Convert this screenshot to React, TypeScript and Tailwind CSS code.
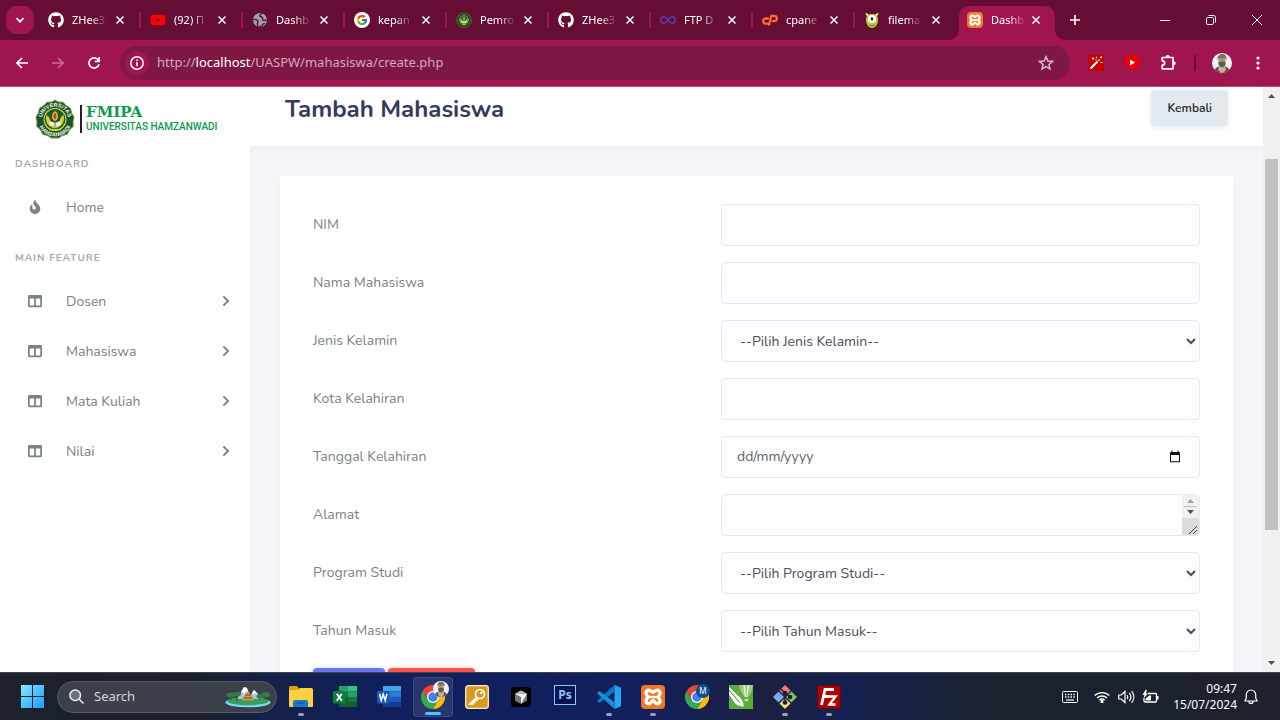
import type { ReactNode } from "react";
import { FaChevronRight, FaColumns, FaFire, FaGithub, FaYoutube } from "react-icons/fa";
import { FcGoogle } from "react-icons/fc";

function Globe() {
  return (
    <svg viewBox="0 0 16 16" className="size-4">
      <circle cx="8" cy="8" r="7" fill="#9aa0a6" />
      <path d="M1.200 7.600c1.800-.4 3.800.2 4.600 1.200.8 1-.2 1.800-.4 2.600-.2 1 .4 1.800.6 3.400M10.200 1.300C9 2.200 7.600 2.600 7.800 3.800c.2 1 2 .8 2.600 1.800.6 1-.4 2 .6 2.600 1 .5 2.400-.2 3.800.3M7 14.800c1.800.2 3-.8 3.600-2 .4-1 1.600-1 2.200-1.600" fill="none" stroke="#650d33" strokeWidth="1.400" />
    </svg>
  );
}

function Emblem({ detailed = false, className }: { detailed?: boolean; className: string }) {
  return (
    <svg viewBox="0 0 40 40" className={className}>
      <path d="M20 1l3 2 5 .2 3 3.400 4.500 2.600 1 4.800 2.500 4-1 4.500.2 5-3.700 3.300-2.200 4.400-4.800 1.400L23.500 39h-7l-4-2.400-4.800-1.400-2.200-4.400L1.800 27.500l.2-5-1-4.500 2.500-4 1-4.800L9 6.600l3-3.400L17 3z" fill="#14542e" stroke="#8a8b2e" strokeWidth="1" />
      <circle cx="20" cy="20.500" r="11.500" fill="#d8d23a" />
      <circle cx="20" cy="20.500" r="10.400" fill="#1b5a2c" />
      <path d="M11.500 16c-2 7 2.500 13 8.500 13s10.500-6 8.500-13c-3 1.500-4 5-4 8.500h-9c0-3.500-1-7-4-8.500z" fill="#d9cf3b" />
      <path d="M20 12c-2.200 1.800-3 3.400-3 5.500 0 2 1 3.500 3 4.500 2-1 3-2.500 3-4.500 0-2.100-.8-3.700-3-5.500z" fill="#e0c22d" />
      <path d="M20 13.500c-2 2-2.200 5 0 7 2.200-2 2-5 0-7z" fill="#d4342a" />
      <path d="M14.500 22l5.500 1.800 5.500-1.800v4L20 27.600 14.500 26z" fill="#f2f2e6" />
      <path d="M20 23.800v3.800" stroke="#14542e" strokeWidth=".8" />
      <path d="M14 30.500h12" stroke="#d9cf3b" strokeWidth="1.400" />
      {detailed && (
        <>
          <path id="ring-top" d="M6.700 21a13.300 13.300 0 0 1 26.600 0" fill="none" />
          <path id="ring-bottom" d="M3 20.500a17 17 0 0 0 34 0" fill="none" />
          <text fontFamily="Liberation Sans" fontWeight="700" fontSize="5.500" fill="#f4f6ea">
            <textPath href="#ring-top" startOffset="50%" textAnchor="middle">UNIVERSITAS</textPath>
          </text>
          <text fontFamily="Liberation Sans" fontWeight="700" fontSize="5.500" fill="#f4f6ea">
            <textPath href="#ring-bottom" startOffset="50%" textAnchor="middle">HAMZANWADI</textPath>
          </text>
        </>
      )}
    </svg>
  );
}

function InfinityMark() {
  return (
    <svg viewBox="0 0 16 16" className="size-4">
      <path d="M8 8c1.300-2 2.300-3.200 4-3.200a3.200 3.200 0 0 1 0 6.400C10.300 11.200 9.300 10 8 8S5.700 4.800 4 4.800a3.200 3.200 0 0 0 0 6.400C5.700 11.200 6.700 10 8 8z" fill="none" stroke="#6b35b5" strokeWidth="1.500" />
    </svg>
  );
}

function CPanelMark() {
  return (
    <svg viewBox="0 0 16 12" className="h-3 w-4" fill="none" stroke="#ff6c2c" strokeWidth="2.300" strokeLinecap="round" strokeLinejoin="round">
      <path d="M6 4.500H3.800a2.600 2.600 0 0 0 0 5.200h1.400" />
      <path d="M7 10.600L9.400 1.800h2.800a2.700 2.700 0 0 1 0 5.400h-1.400" />
    </svg>
  );
}

function Monster() {
  return (
    <svg viewBox="0 0 16 16" className="size-4">
      <path d="M1.500.5c0 2.200.8 3.500 2.500 4L6 3zM14.500.5c0 2.200-.8 3.500-2.500 4L10 3z" fill="#e8d98a" />
      <path d="M8 2c4 0 6 2.500 6 6s-2 8-6 8-6-4.500-6-8 2-6 6-6z" fill="#b9c93c" />
      <circle cx="8" cy="7" r="4" fill="#fff" />
      <ellipse cx="8" cy="6.800" rx="1.200" ry="1.900" fill="#222" />
      <path d="M5 13c2 1 4 1 6 0" stroke="#6d7d18" fill="none" />
    </svg>
  );
}

function XamppTile({ className }: { className: string }) {
  return (
    <span className={`flex items-center justify-center rounded-sm bg-[#f37623] ${className}`}>
      <svg viewBox="0 0 24 24" className="size-full" fill="none" stroke="#fff" strokeWidth="3.400" strokeLinejoin="round">
        <path d="M8 5.200c2 0 2.500 2 4 2s2-2 4-2a2.900 2.900 0 0 1 3 2.900c0 1.800-1.500 2.200-1.500 3.900s1.500 2.100 1.500 3.900a2.900 2.900 0 0 1-3 2.900c-2.300 0-2-3-4-3s-1.700 3-4 3a2.900 2.900 0 0 1-3-2.900c0-1.800 1.500-2.200 1.500-3.900S5 9.900 5 8.100a2.900 2.900 0 0 1 3-2.900z" />
        <path d="M7 12h10" strokeWidth="2.400" />
      </svg>
    </span>
  );
}

const tabs: { title: string; icon: ReactNode }[] = [
  { title: "ZHee3", icon: <FaGithub className="size-4 text-white" /> },
  { title: "(92) П", icon: <FaYoutube className="size-4 text-[#ff0000]" /> },
  { title: "Dashb", icon: <Globe /> },
  { title: "kepan", icon: <span className="rounded-full bg-white p-0.5"><FcGoogle className="size-3" /></span> },
  { title: "Pemro", icon: <Emblem className="size-4" /> },
  { title: "ZHee3", icon: <FaGithub className="size-4 text-white" /> },
  { title: "FTP D", icon: <InfinityMark /> },
  { title: "cpane", icon: <CPanelMark /> },
  { title: "filema", icon: <Monster /> },
];

function Cross() {
  return (
    <svg viewBox="0 0 8 8" className="size-2">
      <path d="M.5.5l7 7M7.500.5l-7 7" stroke="#fff" strokeWidth="1.500" />
    </svg>
  );
}

function TabBody({ title, icon }: { title: string; icon: ReactNode }) {
  return (
    <>
      <span className="flex size-4 shrink-0 items-center justify-center">{icon}</span>
      <span className="ml-2 min-w-8 text-[11px] whitespace-nowrap text-white [mask-image:linear-gradient(to_right,black_55%,rgba(0,0,0,0.15)_100%)]">
        {title}
      </span>
      <button aria-label="Close tab" className="absolute right-[13px] flex size-3 items-center justify-center">
        <Cross />
      </button>
    </>
  );
}

function TabStrip() {
  return (
    <div className="flex h-10 shrink-0 items-center bg-[#650d33]">
      <button aria-label="Search tabs" className="mr-[5px] ml-1.5 flex size-7 items-center justify-center rounded-[10px] bg-[#a1154f]">
        <svg viewBox="0 0 10 10" className="size-2.5">
          <path d="M1.500 3.200L5 6.700l3.500-3.500" fill="none" stroke="#fff" strokeWidth="1.700" />
        </svg>
      </button>
      {tabs.map((tab, i) => (
        <div key={i} className="flex w-[102px] items-center">
          <div className="relative flex flex-1 items-center pl-[9px]">
            <TabBody {...tab} />
          </div>
          <span className={i < tabs.length - 1 ? "h-4 w-0.5 bg-[#a1154f]" : "h-4 w-0.5"} />
        </div>
      ))}
      <div className="relative ml-0.5 flex h-[34px] w-24 items-center self-end rounded-t-[10px] bg-[#a1154f] pb-1.5">
        <svg viewBox="0 0 10 10" className="absolute bottom-0 -left-2.5 size-2.5">
          <path d="M10 0v10H0A10 10 0 0 0 10 0z" fill="#a1154f" />
        </svg>
        <svg viewBox="0 0 10 10" className="absolute -right-2.5 bottom-0 size-2.5">
          <path d="M0 0v10h10A10 10 0 0 1 0 0z" fill="#a1154f" />
        </svg>
        <div className="relative flex flex-1 items-center pl-2">
          <TabBody title="Dashb" icon={<XamppTile className="size-4" />} />
        </div>
      </div>
      <button aria-label="New tab" className="ml-1.5 flex size-7 items-center justify-center">
        <svg viewBox="0 0 10 10" className="size-2.5">
          <path d="M5 0v10M0 5h10" stroke="#fff" strokeWidth="1.600" />
        </svg>
      </button>
      <div className="ml-auto flex">
        <button aria-label="Minimize" className="flex h-10 w-[46px] items-center justify-center">
          <svg viewBox="0 0 10 10" className="size-2.5"><path d="M0 5.500h10" stroke="#fff" /></svg>
        </button>
        <button aria-label="Restore" className="flex h-10 w-[46px] items-center justify-center">
          <svg viewBox="0 0 10 10" className="size-2.5" fill="none" stroke="#fff">
            <rect x=".5" y="2.500" width="7" height="7" rx="1.200" />
            <path d="M2.500.5h5a2 2 0 0 1 2 2v5" />
          </svg>
        </button>
        <button aria-label="Close" className="flex h-10 w-[46px] items-center justify-center">
          <svg viewBox="0 0 10 10" className="size-2.5"><path d="M0 0l10 10M10 0L0 10" stroke="#fff" /></svg>
        </button>
      </div>
    </div>
  );
}

function ToolButton({ label, children }: { label: string; children: ReactNode }) {
  return (
    <button aria-label={label} className="flex h-9 w-9 shrink-0 items-center justify-center">
      {children}
    </button>
  );
}

function Avatar({ className }: { className: string }) {
  return (
    <svg viewBox="0 0 20 20" className={className}>
      <clipPath id="avatar-clip"><circle cx="10" cy="10" r="10" /></clipPath>
      <g clipPath="url(#avatar-clip)">
        <rect width="20" height="20" fill="#e9f3f0" />
        <path d="M2 20c0-4 2.500-6 5-6.500h6c2.500.5 5 2.500 5 6.500z" fill="#544e4e" />
        <path d="M7.500 12h5l1.500 5-3 3H9l-3-3z" fill="#d3ab90" />
        <path d="M6.500 5h7v5c0 2.500-1.500 4-3.500 4s-3.500-1.500-3.500-4z" fill="#b98f7a" />
        <path d="M6.500 9.200l3.500-.7 3.500.7v1.800c0 2-2 3.200-3.500 3.200s-3.500-1.200-3.500-3.200z" fill="#5f5a5b" />
        <path d="M5.500 7C5 3.500 7 1 10 1s5.300 2 4.500 6L13 5l-4 .5L7 5z" fill="#7c716c" />
      </g>
    </svg>
  );
}

function Toolbar() {
  return (
    <div className="flex h-[47px] shrink-0 items-center border-b border-[#bb4a79] bg-[#a1154f] px-1">
      <ToolButton label="Back">
        <svg viewBox="0 0 12 12" className="size-3" fill="none" stroke="#fff" strokeWidth="1.600"><path d="M12 6H1.200M6 1L1 6l5 5" /></svg>
      </ToolButton>
      <ToolButton label="Forward">
        <svg viewBox="0 0 12 12" className="size-3" fill="none" stroke="#c76d94" strokeWidth="1.600"><path d="M0 6h10.800M6 1l5 5-5 5" /></svg>
      </ToolButton>
      <ToolButton label="Reload">
        <svg viewBox="0 0 12 12" className="size-3" fill="none" stroke="#fff" strokeWidth="1.700"><path d="M11 7.200A5.100 5.100 0 1 1 9.800 2.500L11 4M11.100 0v4.300H6.800" /></svg>
      </ToolButton>
      <div className="ml-2 flex h-[34px] flex-1 items-center rounded-full bg-[#7e1842] pr-[15px] pl-[5px]">
        <button aria-label="Site information" className="flex size-6 items-center justify-center rounded-full bg-[#a1154f]">
          <svg viewBox="0 0 14 14" className="size-3.5" fill="none" stroke="#fff" strokeWidth="1.500"><circle cx="7" cy="7" r="6.200" /><path d="M7 6v4.300M7 3.500V5" /></svg>
        </button>
        <span className="ml-2 flex-1 text-[13px] text-[#d5a9bc]">
          http://<span className="text-white">localhost</span>/UASPW/mahasiswa/create.php
        </span>
        <button aria-label="Bookmark" className="flex size-[18px] items-center justify-center">
          <svg viewBox="0 0 16 16" className="size-4" fill="none" stroke="#d9bcc9" strokeWidth="1.500"><path d="M8 1.800l1.800 4.300 4.700.4-3.600 3 1.100 4.500L8 11.600 4 14l1.100-4.500-3.600-3 4.700-.4z" /></svg>
        </button>
      </div>
      <div className="ml-2 flex items-center">
        <ToolButton label="Magic wand">
          <svg viewBox="0 0 16 16" className="size-4">
            <rect width="16" height="16" fill="#c40000" />
            <path d="M2.500 13.500l7-7" stroke="#fff" strokeWidth="2.200" />
            <path d="M10 6l1.500-1.500M4 3.500h2M5 2.500v2M8 2l.8.8M12.500 7.500h2M12 3l2-1.500M7.500 4.500l1 .5" stroke="#fff" strokeWidth="1.200" />
          </svg>
        </ToolButton>
        <ToolButton label="Video enhancer">
          <svg viewBox="0 0 16 16" className="size-4"><path d="M.3 3C2.500 1 5 .6 8 .6s5.500.4 7.700 2.400C15.700 9 13 13 8 15.500 3 13 .3 9 .3 3z" fill="#f50000" /><path d="M6 4.600v5.800L11 7.500z" fill="#fff" /></svg>
        </ToolButton>
        <ToolButton label="Extensions">
          <svg viewBox="0 0 18 18" className="size-[18px]"><path d="M3.200 3.500H14v11.300H3.200v-3.600c3.300-.3 3.300-4.100 0-4.400z" fill="none" stroke="#fff" strokeWidth="1.700" strokeLinejoin="round" /><path d="M6.700 3a2 2 0 0 1 4 0zM14.700 7.200a2 2 0 0 1 0 4z" fill="#fff" /></svg>
        </ToolButton>
        <span className="mx-2 h-4 w-0.5 bg-[#650d33]" />
        <ToolButton label="Profile"><Avatar className="size-5" /></ToolButton>
        <ToolButton label="Menu">
          <svg viewBox="0 0 4 14" className="h-3.5 w-1" fill="#fff"><circle cx="2" cy="2" r="1.600" /><circle cx="2" cy="7" r="1.600" /><circle cx="2" cy="12" r="1.600" /></svg>
        </ToolButton>
      </div>
    </div>
  );
}

function SideHeading({ children }: { children: ReactNode }) {
  return <h2 className="px-[15px] text-[10px] leading-5 font-bold tracking-widest text-[#a4aab1] uppercase">{children}</h2>;
}

function SideLink({ icon, children, arrow = false }: { icon: ReactNode; children: ReactNode; arrow?: boolean }) {
  return (
    <a href="#" className="flex h-[50px] items-center pr-[18px] pl-5 text-[#78828a]">
      <span className="flex w-[30px] justify-center pb-[3px] text-sm">{icon}</span>
      <span className="ml-4 text-sm">{children}</span>
      {arrow && <span className="ml-auto pb-[3px] text-xs"><FaChevronRight /></span>}
    </a>
  );
}

function Sidebar() {
  return (
    <aside className="w-[250px] shrink-0 bg-white shadow-[0_4px_8px_rgba(0,0,0,0.03)]">
      <div className="mt-2.5 flex h-[44px] items-center pl-[35px]">
        <Emblem detailed className="size-10" />
        <span className="ml-[5px] h-7 w-0.5 bg-[#222]" />
        <div className="ml-1 text-[#0a9c4a]">
          <div className="font-['DejaVu_Serif'] text-[15px] leading-4 font-bold">FMIPA</div>
          <div className="font-['Roboto'] text-[10px] leading-[14px] font-medium whitespace-nowrap">UNIVERSITAS HAMZANWADI</div>
        </div>
      </div>
      <div className="mt-[13px]">
        <SideHeading>Dashboard</SideHeading>
      </div>
      <nav className="pt-[9px] pb-[15px]">
        <SideLink icon={<FaFire />}>Home</SideLink>
      </nav>
      <SideHeading>Main Feature</SideHeading>
      <nav className="pt-[9px]">
        {["Dosen", "Mahasiswa", "Mata Kuliah", "Nilai"].map((item) => (
          <SideLink key={item} icon={<FaColumns />} arrow>{item}</SideLink>
        ))}
      </nav>
    </aside>
  );
}

const box = "h-[42px] w-full rounded border border-[#e4e6fc] bg-[#fdfdff] text-sm text-[#495057]";
const field = `${box} px-[15px]`;
const picker = `${box} pl-3.5`;

function Field({ id, label, children }: { id: string; label: string; children: ReactNode }) {
  return (
    <div className="grid grid-cols-[46%_1fr] items-center">
      <label htmlFor={id} className="text-sm text-[#78828a]">{label}</label>
      {children}
    </div>
  );
}

function StudentForm() {
  return (
    <form className="flex flex-col gap-4">
      <Field id="nim" label="NIM"><input id="nim" type="text" className={field} /></Field>
      <Field id="nama" label="Nama Mahasiswa"><input id="nama" type="text" className={field} /></Field>
      <Field id="jenis" label="Jenis Kelamin">
        <select id="jenis" className={picker}><option>--Pilih Jenis Kelamin--</option></select>
      </Field>
      <Field id="kota" label="Kota Kelahiran"><input id="kota" type="text" className={field} /></Field>
      <Field id="tanggal" label="Tanggal Kelahiran">
        <div className={`${field} flex items-center`}>
          <input id="tanggal" type="text" placeholder="dd/mm/yyyy" className="min-w-0 flex-1 placeholder:text-[#5c6268]" />
          <button type="button" aria-label="Pick a date" className="mr-[3px]">
            <svg viewBox="0 0 12 14" className="block h-3.5 w-3"><path d="M2.500.5h1V2h5V.5h1V2h.5a1 1 0 0 1 1 1v9.300H1V3a1 1 0 0 1 1-1h.5zM2 5v6.300h8V5z" fill="#111" fillRule="evenodd" /></svg>
          </button>
        </div>
      </Field>
      <Field id="alamat" label="Alamat">
        <div className="flex h-[42px] overflow-hidden rounded border border-[#e4e6fc] bg-[#fdfdff]">
          <textarea id="alamat" className="min-w-0 flex-1 resize-none overflow-hidden px-[15px] py-2 text-sm" />
          <div className="flex w-[17px] flex-col bg-[#f1f1f1]">
            <svg viewBox="0 0 17 23" className="h-[23px]"><path d="M5 8l3.500-4L12 8z" fill="#a3a3a3" /><path d="M2 11.500h13" stroke="#c1c1c1" /><path d="M5 15h7l-3.500 4z" fill="#505050" /></svg>
            <svg viewBox="0 0 17 17" className="h-[17px] bg-[#dcdcdc]"><path d="M7 16l8-8M11 16l4-4" stroke="#444" /></svg>
          </div>
        </div>
      </Field>
      <Field id="prodi" label="Program Studi">
        <select id="prodi" className={picker}><option>--Pilih Program Studi--</option></select>
      </Field>
      <Field id="tahun" label="Tahun Masuk">
        <select id="tahun" className={picker}><option>--Pilih Tahun Masuk--</option></select>
      </Field>
      <div className="flex gap-[3px]">
        <button type="submit" aria-label="Simpan" className="h-9 w-[72px] rounded bg-[#6777ef] shadow-[0_2px_6px_#acb5f6]" />
        <button type="reset" aria-label="Bersihkan" className="h-9 w-[87px] rounded bg-[#fc544b] shadow-[0_2px_6px_#fd9b96]" />
      </div>
    </form>
  );
}

function PageScrollbar() {
  return (
    <div className="flex w-[17px] shrink-0 flex-col items-center bg-[#f1f1f1]">
      <svg viewBox="0 0 17 17" className="size-[17px] shrink-0"><path d="M5 11l3.500-4L12 11z" fill="#505050" /></svg>
      <div className="flex w-[13px] flex-1 flex-col">
        <div className="flex-[55]" />
        <div className="flex-[371] bg-[#c1c1c1]" />
        <div className="flex-[125]" />
      </div>
      <svg viewBox="0 0 17 17" className="size-[17px] shrink-0"><path d="M5 6h7l-3.500 4z" fill="#505050" /></svg>
    </div>
  );
}

function WebPage() {
  return (
    <div className="flex min-h-0 flex-1 overflow-hidden bg-[#f4f6f9] font-['Nunito','Open_Sans',sans-serif]">
      <Sidebar />
      <main className="min-w-0 flex-1 overflow-hidden">
        <header className="flex h-[59px] items-start justify-between bg-white px-[35px] shadow-[0_4px_8px_rgba(0,0,0,0.03)]">
          <h1 className="pt-1.5 text-2xl leading-8 font-bold text-[#34395e]">Tambah Mahasiswa</h1>
          <a href="#" className="mt-[3px] flex h-9 items-center rounded bg-[#e3eaef] px-4 text-xs font-semibold text-[#191d21] shadow-[0_2px_6px_#e6ecf1]">Kembali</a>
        </header>
        <section className="mx-[30px] mt-[30px] rounded-[3px] bg-white px-[33px] pt-7 pb-6 shadow-[0_4px_8px_rgba(0,0,0,0.03)]">
          <StudentForm />
        </section>
      </main>
      <PageScrollbar />
    </div>
  );
}

function ChromeMark() {
  return (
    <svg viewBox="0 0 24 24" className="size-6">
      <path d="M12 6h10.400A12 12 0 0 1 12 24l5.200-9z" fill="#fbbc04" />
      <path d="M1.600 6l5.200 9 5.200 3 5.200-3L12 24A12 12 0 0 1 1.600 6z" fill="#34a853" />
      <path d="M1.600 6A12 12 0 0 1 22.400 6H12l-5.200 9z" fill="#ea4335" />
      <circle cx="12" cy="12" r="6" fill="#fff" />
      <circle cx="12" cy="12" r="4.700" fill="#3f83f0" />
    </svg>
  );
}

const apps: { name: string; icon: ReactNode; open?: boolean; active?: boolean }[] = [
  {
    name: "File Explorer", open: true,
    icon: (
      <svg viewBox="0 0 24 24" className="size-6">
        <path d="M0 2.500A1.500 1.500 0 0 1 1.500 1H8l2 2.500V8H0z" fill="#e0a010" />
        <path d="M0 5h9l2-2h11.500A1.500 1.500 0 0 1 24 4.500V21a1 1 0 0 1-1 1H1a1 1 0 0 1-1-1z" fill="#ffcf3f" />
        <path d="M4 22v-5a2 2 0 0 1 2-2h11a2 2 0 0 1 2 2v5z" fill="#1479cc" />
        <path d="M8 18h7" stroke="#0b5ca6" strokeWidth="1.500" />
      </svg>
    ),
  },
  {
    name: "Excel",
    icon: (
      <svg viewBox="0 0 24 24" className="size-6">
        <path d="M6 1h9v11H6z" fill="#21a366" /><path d="M15 1h9v5.500h-9z" fill="#33c481" /><path d="M15 6.500h9V12h-9z" fill="#21a366" /><path d="M6 6.500h9V12H6z" fill="#107c41" /><path d="M6 12h9v10H6z" fill="#185c37" /><path d="M15 12h9v5h-9z" fill="#107c41" /><path d="M15 17h9v5h-9z" fill="#185c37" />
        <rect y="6" width="12.500" height="12.500" rx="1" fill="#107c41" /><path d="M3.800 8.800l5 7M8.800 8.800l-5 7" stroke="#fff" strokeWidth="1.900" />
      </svg>
    ),
  },
  {
    name: "Word",
    icon: (
      <svg viewBox="0 0 24 24" className="size-6">
        <path d="M6 1h18v5.500H6z" fill="#41a5ee" /><path d="M6 6.500h18V12H6z" fill="#2b7cd3" /><path d="M6 12h18v5H6z" fill="#185abd" /><path d="M6 17h18v5H6z" fill="#103f91" />
        <rect y="6" width="12.500" height="12.500" rx="1" fill="#185abd" /><path d="M2.500 8.800l1.700 6.700 2-6.300 2 6.300 1.700-6.700" fill="none" stroke="#fff" strokeWidth="1.500" />
      </svg>
    ),
  },
  {
    name: "Chrome", open: true, active: true,
    icon: <span className="relative"><ChromeMark /><Avatar className="absolute -top-1 -right-1 size-4" /></span>,
  },
  {
    name: "Key manager",
    icon: (
      <svg viewBox="0 0 24 24" className="size-6">
        <rect x=".7" y=".7" width="22.600" height="22.600" rx="2.500" fill="#d99a20" stroke="#fbeecb" strokeWidth="1.300" />
        <g fill="none" stroke="#fff" strokeWidth="1.700"><circle cx="15" cy="9" r="4.500" /><path d="M11.800 12.200L5 19h3v-2h2v-2h2l1-1.500" /></g><circle cx="16.300" cy="7.700" r="1.300" fill="#fff" />
      </svg>
    ),
  },
  {
    name: "Cursor",
    icon: (
      <svg viewBox="0 0 24 24" className="size-6">
        <rect x="2" y="2" width="20" height="20" rx="4" fill="#000" />
        <path d="M12 5.500l6 3.200v7L12 19l-6-3.300v-7z" fill="#777" /><path d="M6 8.700h12L12 19v-7z" fill="#f3f3f3" /><path d="M12 5.500l6 3.200H6z" fill="#bbb" />
      </svg>
    ),
  },
  {
    name: "Photoshop",
    icon: <span className="mb-1 flex h-5 w-[22px] items-center justify-center border border-[#8cc6ff] bg-[#0a1450] text-xs font-bold text-[#8cc6ff]">Ps</span>,
  },
  {
    name: "Visual Studio Code", open: true,
    icon: (
      <svg viewBox="0 0 24 24" className="size-6">
        <path d="M17.500 0L24 2.800v18.400L17.500 24z" fill="#27a3ef" /><path d="M17.500 0v6.800L2.500 18 0 15.800z" fill="#0c79c4" /><path d="M17.500 24v-6.800L2.500 6 0 8.200z" fill="#1490df" />
      </svg>
    ),
  },
  { name: "XAMPP", open: true, icon: <XamppTile className="size-6" /> },
  {
    name: "Chrome profile",
    icon: (
      <span className="relative">
        <ChromeMark />
        <span className="absolute -top-px -right-px flex size-3.5 items-center justify-center rounded-full bg-[#0c4f8c] text-[8px] text-white">M</span>
      </span>
    ),
  },
  {
    name: "CorelDRAW",
    icon: (
      <svg viewBox="0 0 24 24" className="size-6">
        <rect width="24" height="24" fill="#5faa3d" />
        <path d="M10.500 0H24c0 5-2.500 9-5 12.500h-3C13 9 10.500 5 10.500 0z" fill="#9ccc7f" />
        <path d="M14.500 0h1.500l1 12-1-.3C15 8 14.500 4 14.500 0zM18.500 0h2l-2.500 12h-.7z" fill="#e4f3da" />
        <path d="M15.500 14h3.800v2.200h-3.800z" fill="#c6e3b6" />
        <path d="M0 2l11 10.500c2 2 3.500 5 3.800 9-4 0-7-1.500-9-3.500L0 9.500z" fill="#fff" />
        <path d="M0 5l11 13" stroke="#3d7d25" />
      </svg>
    ),
  },
  {
    name: "Git", open: true,
    icon: (
      <svg viewBox="0 0 24 24" className="size-6">
        <path d="M12 0l5.500 5.500L12 11 6.500 5.500z" fill="#f47c7c" /><path d="M18.500 6.500L24 12l-5.500 5.500L13 12z" fill="#7fc456" /><path d="M12 13l5.500 5.500L12 24l-5.500-5.500z" fill="#f4dc79" /><path d="M5.500 6.500L11 12l-5.500 5.500L0 12z" fill="#7aa8f2" />
        <path d="M8 4l4 4v9M12 8l5 4" stroke="#1b1d38" strokeWidth="1.500" fill="none" />
        <g fill="#1b1d38"><circle cx="12" cy="8" r="2.300" /><circle cx="12" cy="17.500" r="2.300" /><circle cx="17" cy="12" r="2.300" /></g>
      </svg>
    ),
  },
  {
    name: "FileZilla", open: true,
    icon: (
      <svg viewBox="0 0 24 24" className="size-6">
        <rect x=".7" y=".7" width="22.600" height="22.600" fill="#b10000" stroke="#7a0000" strokeWidth="1.400" strokeDasharray="1.500 1.500" />
        <path d="M4.500 20L8 4.500h9M6.500 11.500h6" fill="none" stroke="#fff" strokeWidth="2.800" /><path d="M12 11.500h6.500l-6 8h6" fill="none" stroke="#fff" strokeWidth="2.400" />
      </svg>
    ),
  },
];

function Taskbar() {
  return (
    <footer className="flex h-12 shrink-0 items-center border-t border-[#41444f] bg-[linear-gradient(90deg,#1c212b_0%,#1a212e_16%,#12204c_22%,#101f5e_32%,#111f5c_50%,#1b2040_60%,#131f50_66%,#1a2130_76%,#1c212b_100%)] pl-[21px] text-white">
      <button aria-label="Start" className="shrink-0">
        <svg viewBox="0 0 23 23" className="block size-[23px]">
          <defs><linearGradient id="start" x1="0" y1="0" x2="1" y2="1"><stop offset="0" stopColor="#8fe3ff" /><stop offset="1" stopColor="#12a0fb" /></linearGradient></defs>
          <path d="M0 0h11v11H0zM12 0h11v11H12zM0 12h11v11H0zM12 12h11v11H12z" fill="url(#start)" />
        </svg>
      </button>
      <button className="ml-[13px] flex h-8 w-[220px] shrink-0 items-center rounded-full border border-[#565b68] bg-[#3b404b] pl-[11px] text-[13px] text-[#d5d7dc]">
        <svg viewBox="0 0 15 15" className="size-[15px]" fill="#6d717b" stroke="#eee" strokeWidth="1.500"><circle cx="6.200" cy="6.200" r="5.300" /><path d="M10 10l4.500 4.500" /></svg>
        <span className="ml-2.5">Search</span>
        <svg viewBox="0 0 46 22" className="mr-[5px] ml-auto h-[22px] w-[46px]">
          <ellipse cx="23" cy="16.500" rx="22.500" ry="4.800" fill="#79dcf0" />
          <ellipse cx="23" cy="15.200" rx="20.500" ry="4" fill="#35a05d" />
          <path d="M12 13l4-7 3-5 3 1 5 11zM24 13l3-6 2-3 9 9z" fill="#a9bfe0" /><path d="M16 6l3-5 3 1 1 5-2-2-2 4-1-3zM27 7l2-3 4 4-3-1-1 2z" fill="#fff" />
          <path d="M23 5.500l3 3h-1l3 3h-1l2 3H17l2-3h-1l3-3h-1z" fill="#d79a3a" /><path d="M20 9h6M18.500 12h9" stroke="#7a4a1a" />
          <path d="M6 9v5M12 10v5M35 9v5M41 8v6" stroke="#6f4a2a" strokeWidth="1.500" />
          <g fill="#2f7d43"><ellipse cx="6" cy="9" rx="4.500" ry="2.600" /><ellipse cx="12.500" cy="8" rx="3.500" ry="2.200" /><ellipse cx="35" cy="10.500" rx="3.500" ry="2.200" /><ellipse cx="40.500" cy="8.500" rx="4.500" ry="2.600" /></g>
        </svg>
      </button>
      <div className="ml-0.5 flex">
        {apps.map((app) => (
          <div key={app.name} className="flex w-11 justify-center">
            <button aria-label={app.name} className={`relative flex size-10 items-center justify-center rounded ${app.active ? "border border-white/10 bg-white/10" : ""}`}>
              {app.icon}
              {app.open && <span className={`absolute bottom-px h-[3px] rounded-full ${app.active ? "w-4 bg-[#4cc2ff]" : "w-1.5 bg-[#9ea1b3]"}`} />}
            </button>
          </div>
        ))}
      </div>
      <div className="ml-auto flex items-center pr-[22px]">
        <svg viewBox="0 0 16 12" className="h-3 w-4" fill="none" stroke="#fff"><rect x=".5" y=".5" width="15" height="11" rx="1" /><path d="M3 3.500h10M3 6h10" strokeWidth="1.400" strokeDasharray="1.400 1.400" /><path d="M4 9h8" strokeWidth="1.200" /></svg>
        <svg viewBox="0 0 16 12" className="ml-4 h-3 w-4" fill="none" stroke="#fff" strokeWidth="1.300"><path d="M.7 4.500a10.500 10.500 0 0 1 14.600 0M3 7a7.300 7.300 0 0 1 10 0M5.300 9.200a4 4 0 0 1 5.400 0" /><circle cx="8" cy="10.500" r="1" fill="#fff" /></svg>
        <svg viewBox="0 0 17 14" className="ml-2 h-3.5 w-[17px]" fill="none" stroke="#fff" strokeWidth="1.200"><path d="M.7 5h2.600L7 1.500v11L3.300 9H.7zM9 5c.9 1.200.9 2.800 0 4M11.300 3c2 2.400 2 5.600 0 8M13.600 1.200c3 3.500 3 8.100 0 11.600" /></svg>
        <svg viewBox="0 0 17 14" className="ml-[7px] h-3.5 w-[17px]"><path d="M6 3.500h7.500a1 1 0 0 1 1 1v6.500a1 1 0 0 1-1 1H3a1 1 0 0 1-1-1V8" fill="none" stroke="#fff" strokeWidth="1.300" /><path d="M15 6h1.500v3.500H15zM3.500 9l3.500-3.500h2v5H3.500z" fill="#fff" /><path d="M3.500 0L.5 5h2L1.500 8.500 6 3.500H4L5 0z" fill="#fff" /></svg>
        <div className="ml-3.5 text-right text-xs leading-4"><div>09:47</div><div>15/07/2024</div></div>
        <svg viewBox="0 0 14 16" className="ml-[7px] h-4 w-3.5" fill="none" stroke="#fff" strokeWidth="1.200"><path d="M7 1a4.700 4.700 0 0 0-4.700 4.700V9L1 12h12l-1.300-3V5.700A4.700 4.700 0 0 0 7 1zM5 12.500a2 2 0 0 0 4 0" /></svg>
      </div>
    </footer>
  );
}

export default function App() {
  return (
    <div className="flex h-screen flex-col overflow-hidden font-['Segoe_UI','Noto_Sans',sans-serif]">
      <TabStrip />
      <Toolbar />
      <WebPage />
      <Taskbar />
    </div>
  );
}
